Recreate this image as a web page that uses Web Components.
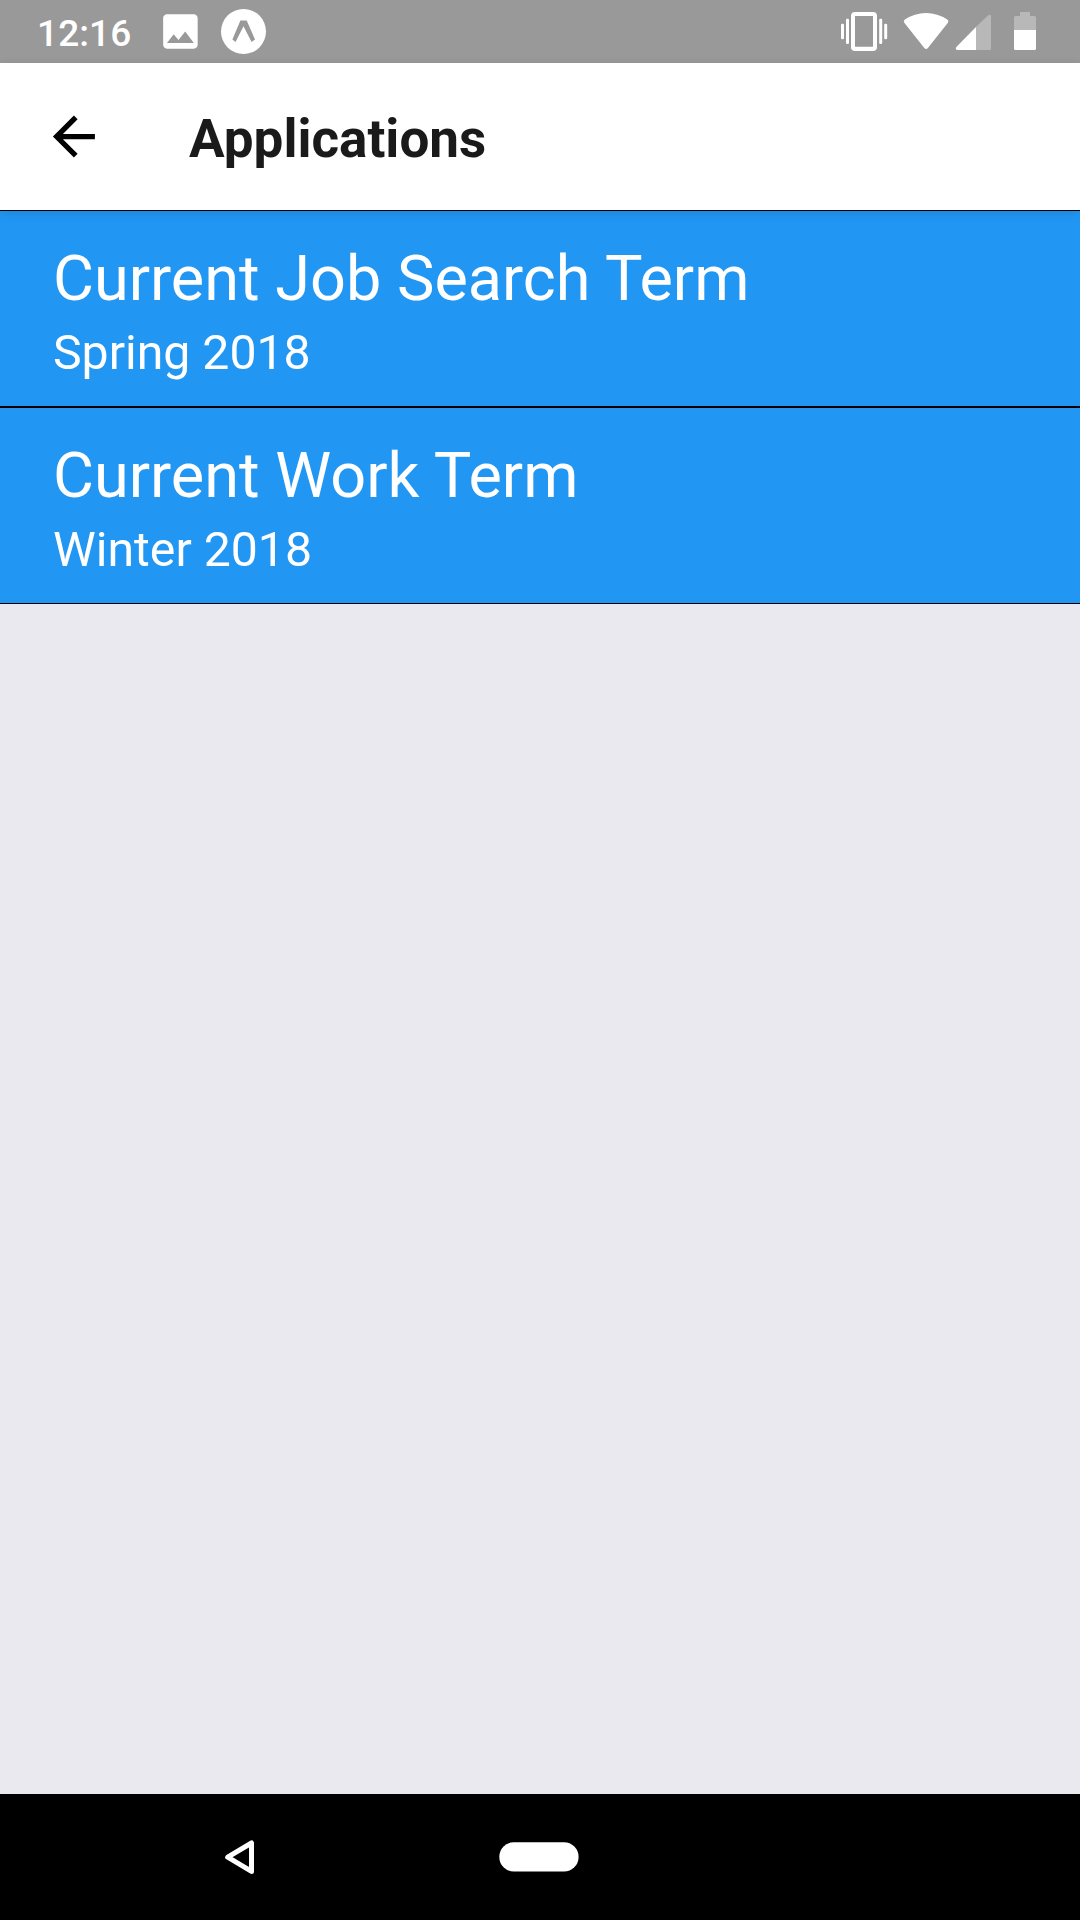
<!DOCTYPE html>
<html lang="en">
<head>
<meta charset="utf-8">
<title>Applications</title>
<style>
html, body { margin: 0; height: 100%; }
body { font-family: Roboto, sans-serif; }
</style>
</head>
<body>
<app-screen>
  <status-bar slot="status">12:16</status-bar>
  <nav-header slot="header">Applications</nav-header>
  <term-item><span slot="title">Current Job Search Term</span><span slot="term">Spring 2018</span></term-item>
  <term-item><span slot="title">Current Work Term</span><span slot="term">Winter 2018</span></term-item>
  <system-nav slot="nav"></system-nav>
</app-screen>
<script>
const define = (name, html) => customElements.define(name, class extends HTMLElement {
  constructor() {
    super();
    this.attachShadow({ mode: 'open' }).innerHTML = html;
  }
});

define('app-screen', `
<style>
:host { display: flex; flex-direction: column; width: 1080px; height: 1920px; overflow: hidden; background: #e9e9ef; }
main { flex: 1; display: flex; flex-direction: column; }
</style>
<slot name="status"></slot>
<slot name="header"></slot>
<main><slot></slot></main>
<slot name="nav"></slot>`);

define('status-bar', `
<style>
:host { display: flex; align-items: center; height: 63px; background: #999; color: #fff; }
.time { font-size: 37px; font-weight: 500; letter-spacing: .1px; line-height: 44px; padding: 4px 0 0 37px; width: 120px; box-sizing: content-box; white-space: nowrap; }
svg { display: block; flex: none; }
.left { width: 118px; }
.right { margin-left: auto; width: 260px; }
</style>
<div class="time"><slot></slot></div>
<svg class="left" width="118" height="63" viewBox="157 0 118 63" fill="#fff">
  <path transform="translate(157.4 8.4) scale(1.917)" d="M21 19V5c0-1.1-.9-2-2-2H5c-1.1 0-2 .9-2 2v14c0 1.1.9 2 2 2h14c1.1 0 2-.9 2-2zM8.500 13.500l2.500 3.010L14.500 12l4.500 6H5l3.500-4.500z"/>
  <circle cx="243.500" cy="31.500" r="22.500"/>
  <path fill="#999" d="M240.400 20.500H246.700L255 39.600L251.600 42L243.500 26.200L235.500 42L232.400 39.600Z"/>
</svg>
<svg class="right" width="260" height="63" viewBox="820 0 260 63" fill="#fff">
  <path fill-rule="evenodd" d="M855 12h18a4 4 0 0 1 4 4v31a4 4 0 0 1-4 4h-18a4 4 0 0 1-4-4V16a4 4 0 0 1 4-4zM855 16v30.700h18V16z"/>
  <rect x="841" y="23.700" width="3" height="15.600" rx="1.300"/>
  <rect x="846" y="18.700" width="3" height="25.300" rx="1.300"/>
  <rect x="879.200" y="18.700" width="3" height="25.300" rx="1.300"/>
  <rect x="884.200" y="23.700" width="3" height="15.600" rx="1.300"/>
  <path d="M904.300 22.800Q902.900 20.900 904.900 19.600Q914.500 13 926.100 13Q937.700 13 947.300 19.600Q949.300 20.900 947.900 22.800L927.900 48Q926.100 50 924.300 48Z"/>
  <path fill="#b8b8b8" d="M976 26.800L988.300 15.200Q991 13.600 991 16.500V48.500Q991 50 989.500 50H976Z"/>
  <path d="M976 27V50H957.500Q954.900 49.700 956.300 47Z"/>
  <path fill="#b8b8b8" d="M1014 30V17.500Q1014 16 1015.500 16H1020V12H1030V16H1034.500Q1036 16 1036 17.500V30Z"/>
  <path d="M1014 30H1036V48.500Q1036 50 1034.500 50H1015.500Q1014 50 1014 48.500Z"/>
</svg>`);

define('nav-header', `
<style>
:host { display: flex; align-items: center; height: 147px; background: #fff; position: relative; z-index: 1; box-shadow: 0 3px 10px rgba(0,0,0,.12); }
svg { display: block; margin: 0 84px 0 42px; flex: none; }
h1 { margin: 0; font-size: 53px; line-height: 62px; font-weight: 700; color: #1a1a1a; white-space: nowrap; padding-top: 4px; }
</style>
<svg width="63" height="63" viewBox="-0.150 0 24 24"><path d="M20 11H7.830l5.590-5.590L12 4l-8 8 8 8 1.410-1.410L7.830 13H20v-2z"/></svg>
<h1><slot></slot></h1>`);

define('term-item', `
<style>
:host { display: flex; flex-direction: column; box-sizing: border-box; height: 197px; padding: 31px 53px 0; border: solid #000; border-width: 1px 0; background: #2196f3; color: #fff; white-space: nowrap; }
.title { font-size: 63px; line-height: 74px; }
.term { font-size: 48.200px; line-height: 58px; margin-top: 8px; }
</style>
<div class="title"><slot name="title"></slot></div>
<div class="term"><slot name="term"></slot></div>`);

define('system-nav', `
<style>
:host { display: block; height: 126px; background: #000; }
svg { display: block; }
</style>
<svg width="1080" height="126" viewBox="0 1794 1080 126">
  <path d="M227.700 1857.200L251.500 1843V1871.400Z" fill="none" stroke="#fff" stroke-width="5" stroke-linejoin="round"/>
  <rect x="499.300" y="1842.300" width="79.300" height="29.200" rx="14.600" fill="#fff"/>
</svg>`);
</script>
</body>
</html>
